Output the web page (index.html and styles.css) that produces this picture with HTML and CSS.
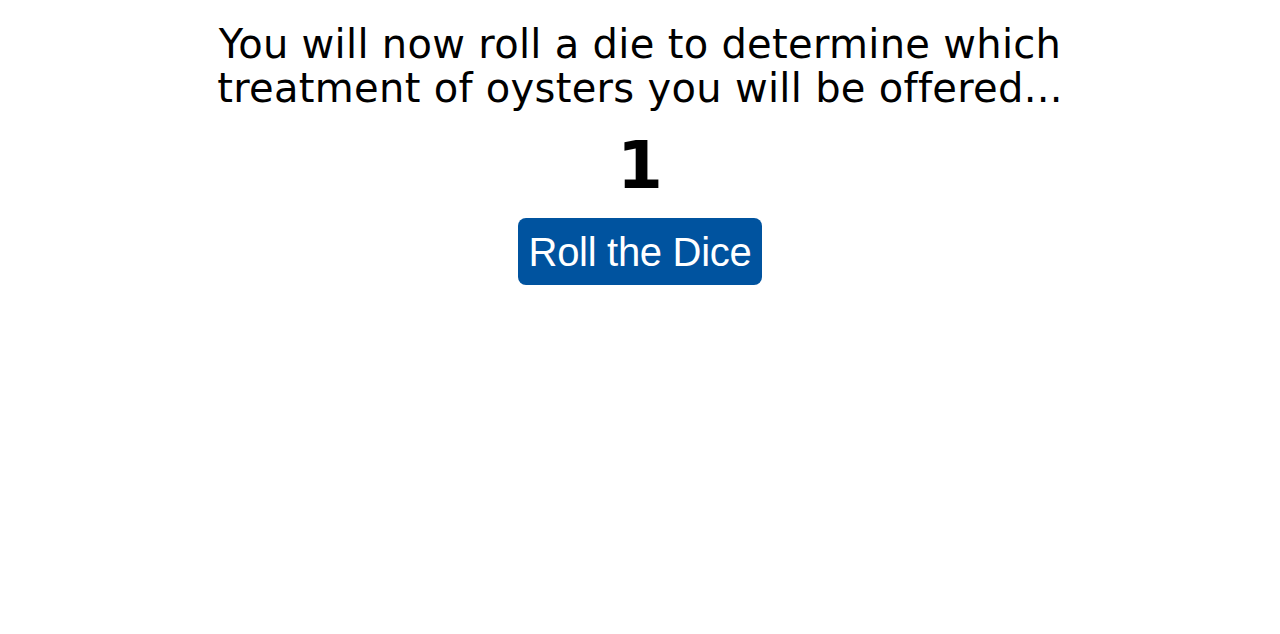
FILE: index.html
```html
<!DOCTYPE html>
<html>
<head>
<meta charset="utf-8">
<link rel="stylesheet" href="styles.css">
</head>
<body>
<main class="page">
  <p class="intro">You will now roll a die to determine which<br>treatment of oysters you will be offered...</p>
  <div class="result">1</div>
  <button class="roll">Roll the Dice</button>
</main>
</body>
</html>
```
FILE: styles.css
```css
html, body {
  margin: 0;
  padding: 0;
  background: #fff;
}
.page {
  display: flex;
  flex-direction: column;
  align-items: center;
  padding-top: 22px;
}
.intro {
  margin: 0;
  font-family: "DejaVu Sans", Verdana, sans-serif;
  font-size: 40px;
  line-height: 44px;
  letter-spacing: 0.3px;
  text-align: center;
  color: #000;
}
.result {
  margin-top: 21px;
  font-family: "DejaVu Sans", Verdana, sans-serif;
  font-weight: bold;
  font-size: 66px;
  line-height: 70px;
  color: #000;
}
.roll {
  margin-top: 17px;
  font-family: "Liberation Sans", Arial, sans-serif;
  font-size: 40px;
  line-height: 46px;
  letter-spacing: -0.3px;
  color: #fff;
  background: #00539f;
  border: none;
  border-radius: 8px;
  padding: 11px 11px 10px;
}
```
